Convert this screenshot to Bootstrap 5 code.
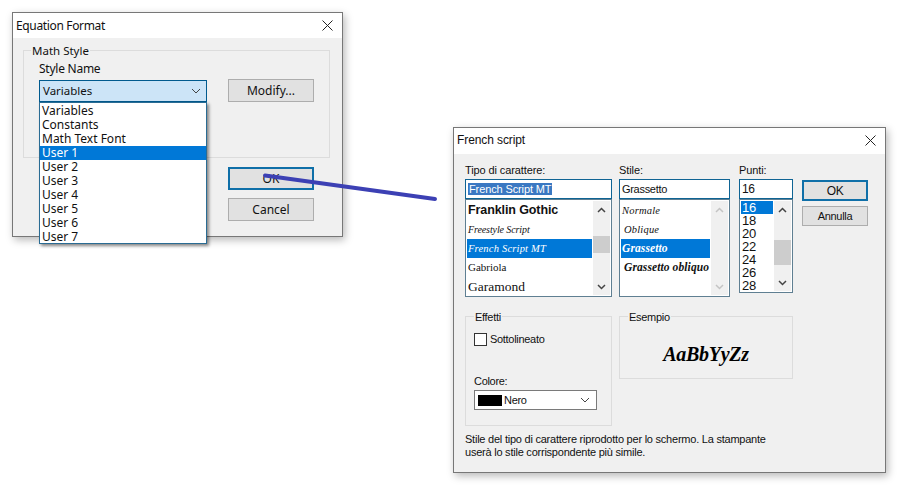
<!DOCTYPE html>
<html lang="it">
<head>
<meta charset="utf-8">
<title>Equation Format</title>
<link rel="stylesheet" href="https://cdn.jsdelivr.net/npm/bootstrap@5.3.0/dist/css/bootstrap.min.css">
<style>
html,body{margin:0;background:#fff;overflow:hidden}
body{width:898px;height:492px;position:relative;color:#111}
.dlg{position:absolute;background:#f0f0f0;border:1px solid #777;box-shadow:2px 3px 8px rgba(0,0,0,.28);display:flex;flex-direction:column}
.dlg-a{left:12px;top:12px;width:331px;height:225px;font:12px/14px "Noto Sans",sans-serif}
.dlg-b{left:453px;top:127px;width:433px;height:346px;font:11px/14px "Liberation Sans",sans-serif;letter-spacing:-.3px}
.tbar{background:#fff;flex:none;display:flex;align-items:center;justify-content:space-between}
.dlg-a .tbar{height:25px;padding:0 9px 0 3px;letter-spacing:-.35px}
.dlg-b .tbar{height:26px;padding:0 9px 2px 3px;font-size:12px;letter-spacing:-.1px}
.gbox{border:1px solid #dcdcdc;margin:0;min-width:0;position:relative}
.gbox legend{float:none;width:auto;font-size:inherit;line-height:14px;margin:0;padding:0 1px;position:absolute;top:-7px;left:7px;background:#f0f0f0}
.gbox-math{margin:12px 12px 0 10px;height:108px;padding:0 0 0 15px;display:flex;gap:21px}
.gbox-math legend{font-size:11.5px;left:7px}
.col-sel{width:168px;padding-top:11px}
.lbl-style{letter-spacing:-.25px}
.sel-a{height:22px;margin-top:4px;background:#cce4f7;border:1px solid #005a8e;display:flex;align-items:center;justify-content:space-between;padding:0 5px 0 3px;position:relative;font-size:11.5px}
.drop{position:absolute;left:-1px;top:21px;width:168px;height:142px;z-index:2;background:#fff;border:1px solid #2a6c94;border-radius:0;box-shadow:2px 2px 3px rgba(0,0,0,.45);padding-top:1px;overflow:hidden}
.drop .list-group-item,.drop .list-group-item+.list-group-item.active{border:0;margin:0;border-radius:0;padding:0 2px;line-height:14px;height:14px;background:transparent;color:#111;font-size:12px}
.drop .list-group-item.active,.drop .list-group-item+.list-group-item.active{background:#0078d7;color:#fff}
.wbtn{background:#e1e1e1;border:1px solid #adadad;border-radius:0;padding:0;font:inherit;letter-spacing:inherit;color:#111;display:flex;align-items:center;justify-content:center}
.wbtn:hover{background:#e1e1e1;border-color:#adadad;color:#111}
.wbtn-def{border:2px solid #0f6fa8}
.wbtn-def:hover{border-color:#0f6fa8}
.btn-w1{width:86px;height:23px}
.btn-ok2{width:66px;height:21px;font-size:12px}
.btn-can2{width:66px;height:20px}
.side-btns{margin-top:10px;gap:5px}
.modify{margin-top:28px}
.a-actions{margin:9px 0 0 215px;display:flex;flex-direction:column;gap:8px}
.b-body{flex:1;padding:16px 0 0 11px;position:relative}
.font-row{display:flex;align-items:flex-start}
.fcol{display:flex;flex-direction:column}
.fcol label{margin:-6px 0 4px;height:11px;line-height:12px;letter-spacing:-.1px}
.f1{width:147px;margin-right:7px}
.f2{width:111px;margin-right:9px}
.f3{width:54px;margin-right:9px}
.tinput{height:20px;background:#fff;border:1px solid #0f6494;line-height:18px;padding:0 2px;white-space:nowrap;overflow:hidden}
.f1 .tinput{letter-spacing:-.12px}
.f3 .tinput{font-size:12px}
.sel-txt{background:#3a78c2;color:#fff;padding:0 1px}
.flist{background:#fff;border:1px solid #5f7f92;display:flex;padding:1px}
.f1 .flist,.f2 .flist{height:98px}
.f3 .flist{height:94px}
.fitems{flex:1;min-width:0;overflow:hidden;display:flex;flex-direction:column;white-space:nowrap;letter-spacing:0}
.fitems>div{height:19px;line-height:19px;padding-left:1px}
.fitems>.on{background:#0078d7;color:#fff}
.f3 .fitems>div{height:13px;line-height:13px;font-size:13px;letter-spacing:-.2px}
.scr{width:17px;background:#f0f0f0;display:flex;flex-direction:column;align-items:center;flex:none;margin-left:1px}
.scr-arrow{height:17px;display:flex;align-items:center;justify-content:center;flex:none}
.scr-track{flex:1;width:100%}
.thumb{background:#cdcdcd;width:100%}
.t-font{margin-top:18px;height:17px}
.t-pt{margin-top:22px;height:25px}
.sc1{font-family:"Liberation Serif",serif;font-style:italic;font-size:10.5px;letter-spacing:.2px}
.sc-free{font-size:10px;letter-spacing:-.1px}
.sc2{font-family:"Liberation Serif",serif;font-style:italic;font-weight:700;font-size:11.5px;letter-spacing:.1px}
.fitems>.sc-ind{padding-left:3px}
.it-fg{font-weight:700;font-size:12.5px;letter-spacing:-.1px}
.it-gb{font-family:"Liberation Serif",serif;font-size:11px}
.it-gm{font-family:"Liberation Serif",serif;font-size:13.5px}
.low-row{display:flex;gap:7px;margin-top:19px;align-items:flex-start}
.gbox-eff{width:147px;height:110px;padding:0 8px}
.gbox-ex{width:174px;height:63px;display:flex;align-items:center;justify-content:center;padding-top:12px}
.gbox-eff legend,.gbox-ex legend{left:8px}
.chkrow{display:flex;align-items:center;gap:3px;margin-top:15px}
.chk{width:13px;height:13px;background:#fff;border:1px solid #333;flex:none}
.colore{margin-top:28px}
.sel-b{height:20px;width:123px;margin-top:2px;background:#fff;border:1px solid #7a7a7a;display:flex;align-items:center;padding:0 6px 0 3px}
.swatch{width:24px;height:11px;background:#000;margin-right:2px;flex:none}
.sample{font-family:"Liberation Serif",serif;font-style:italic;font-weight:700;font-size:20px;line-height:20px;letter-spacing:-.3px;color:#000}
.note{margin:7px 0 0}
.note-lines{display:block;line-height:13px;letter-spacing:-.23px}
.arrow{position:absolute;left:0;top:0;z-index:5;pointer-events:none}
</style>
</head>
<body>

<div class="dlg dlg-a">
  <div class="tbar"><span>Equation Format</span>
    <svg width="11" height="11" viewBox="0 0 11 11"><path d="M.5.5l10 10M10.500.5l-10 10" stroke="#222" fill="none"/></svg>
  </div>
  <div class="flex-grow-1 position-relative">
    <fieldset class="gbox gbox-math">
      <legend>Math Style</legend>
      <div class="col-sel">
        <div class="lbl-style">Style Name</div>
        <div class="sel-a"><span>Variables</span>
          <svg width="10" height="6" viewBox="0 0 10 6"><path d="M1 1l4 4 4-4" stroke="#444" fill="none"/></svg>
          <div class="drop list-group">
            <div class="list-group-item">Variables</div>
            <div class="list-group-item">Constants</div>
            <div class="list-group-item">Math Text Font</div>
            <div class="list-group-item active">User 1</div>
            <div class="list-group-item">User 2</div>
            <div class="list-group-item">User 3</div>
            <div class="list-group-item">User 4</div>
            <div class="list-group-item">User 5</div>
            <div class="list-group-item">User 6</div>
            <div class="list-group-item">User 7</div>
          </div>
        </div>
      </div>
      <div><button class="btn wbtn btn-w1 modify" type="button">Modify...</button></div>
    </fieldset>
    <div class="a-actions">
      <button class="btn wbtn wbtn-def btn-w1" type="button">OK</button>
      <button class="btn wbtn btn-w1" type="button">Cancel</button>
    </div>
  </div>
</div>

<div class="dlg dlg-b">
  <div class="tbar"><span>French script</span>
    <svg width="11" height="11" viewBox="0 0 11 11"><path d="M.5.5l10 10M10.500.5l-10 10" stroke="#222" fill="none"/></svg>
  </div>
  <div class="b-body">
    <div class="font-row">
      <div class="fcol f1">
        <label>Tipo di carattere:</label>
        <div class="tinput"><span class="sel-txt">French Script MT</span></div>
        <div class="flist">
          <div class="fitems">
            <div class="it-fg">Franklin Gothic</div>
            <div class="sc1 sc-free">Freestyle Script</div>
            <div class="sc1 on">French Script MT</div>
            <div class="it-gb">Gabriola</div>
            <div class="it-gm">Garamond</div>
          </div>
          <div class="scr">
            <div class="scr-arrow"><svg width="9" height="6" viewBox="0 0 9 6"><path d="M1 5l3.500-3.500L8 5" stroke="#444" stroke-width="1.500" fill="none"/></svg></div>
            <div class="scr-track"><div class="thumb t-font"></div></div>
            <div class="scr-arrow"><svg width="9" height="6" viewBox="0 0 9 6"><path d="M1 1l3.500 3.500L8 1" stroke="#444" stroke-width="1.500" fill="none"/></svg></div>
          </div>
        </div>
      </div>
      <div class="fcol f2">
        <label>Stile:</label>
        <div class="tinput">Grassetto</div>
        <div class="flist">
          <div class="fitems">
            <div class="sc1">Normale</div>
            <div class="sc1 sc-ind">Oblique</div>
            <div class="sc2 on">Grassetto</div>
            <div class="sc2 sc-ind">Grassetto obliquo</div>
          </div>
          <div class="scr">
            <div class="scr-arrow"><svg width="9" height="6" viewBox="0 0 9 6"><path d="M1 5l3.500-3.500L8 5" stroke="#c4c4c4" stroke-width="1.500" fill="none"/></svg></div>
            <div class="scr-track"></div>
            <div class="scr-arrow"><svg width="9" height="6" viewBox="0 0 9 6"><path d="M1 1l3.500 3.500L8 1" stroke="#c4c4c4" stroke-width="1.500" fill="none"/></svg></div>
          </div>
        </div>
      </div>
      <div class="fcol f3">
        <label>Punti:</label>
        <div class="tinput">16</div>
        <div class="flist">
          <div class="fitems">
            <div class="on">16</div><div>18</div><div>20</div><div>22</div><div>24</div><div>26</div><div>28</div>
          </div>
          <div class="scr">
            <div class="scr-arrow"><svg width="9" height="6" viewBox="0 0 9 6"><path d="M1 5l3.500-3.500L8 5" stroke="#444" stroke-width="1.500" fill="none"/></svg></div>
            <div class="scr-track"><div class="thumb t-pt"></div></div>
            <div class="scr-arrow"><svg width="9" height="6" viewBox="0 0 9 6"><path d="M1 1l3.500 3.500L8 1" stroke="#444" stroke-width="1.500" fill="none"/></svg></div>
          </div>
        </div>
      </div>
      <div class="d-flex flex-column side-btns">
        <button class="btn wbtn wbtn-def btn-ok2" type="button">OK</button>
        <button class="btn wbtn btn-can2" type="button">Annulla</button>
      </div>
    </div>
    <div class="low-row">
      <fieldset class="gbox gbox-eff">
        <legend>Effetti</legend>
        <div class="chkrow"><span class="chk"></span><span>Sottolineato</span></div>
        <div class="colore">Colore:</div>
        <div class="sel-b"><span class="swatch"></span><span class="flex-grow-1">Nero</span>
          <svg width="10" height="6" viewBox="0 0 10 6"><path d="M1 1l4 4 4-4" stroke="#444" fill="none"/></svg>
        </div>
      </fieldset>
      <fieldset class="gbox gbox-ex">
        <legend>Esempio</legend>
        <div class="sample">AaBbYyZz</div>
      </fieldset>
    </div>
    <p class="note"><span class="note-lines">Stile del tipo di carattere riprodotto per lo schermo. La stampante<br>userà lo stile corrispondente più simile.</span></p>
  </div>
</div>

<svg class="arrow" width="898" height="492" viewBox="0 0 898 492"><path d="M265 175.500L435 199" stroke="#3c40b4" stroke-width="4" stroke-linecap="round" fill="none"/></svg>

<script src="https://cdn.jsdelivr.net/npm/bootstrap@5.3.0/dist/js/bootstrap.bundle.min.js"></script>
</body>
</html>
